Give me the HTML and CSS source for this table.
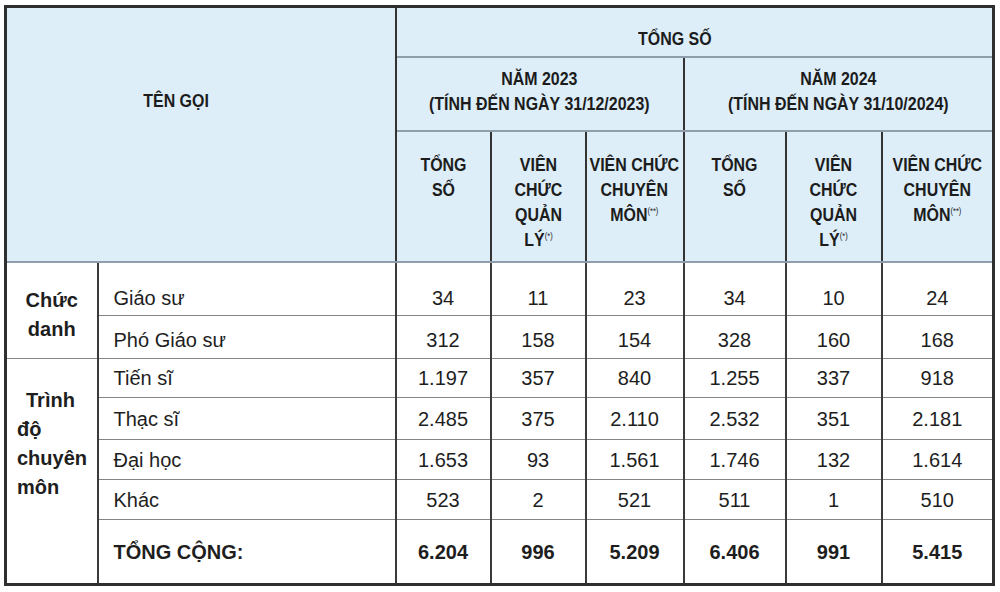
FILE: index.html
```html
<!DOCTYPE html>
<html lang="vi">
<head>
<meta charset="utf-8">
<title>Tổng số viên chức</title>
<link rel="stylesheet" href="styles.css">
</head>
<body>
<table class="staff">
  <colgroup>
    <col class="c-a"><col class="c-b"><col class="c-c"><col class="c-d"><col class="c-e"><col class="c-f"><col class="c-g"><col class="c-h">
  </colgroup>
  <thead>
    <tr class="h1">
      <th colspan="2" rowspan="3" class="name-head"><span class="hx">TÊN GỌI</span></th>
      <th colspan="6" class="total-head"><span class="hx">TỔNG SỐ</span></th>
    </tr>
    <tr class="h2">
      <th colspan="3"><span class="hx">NĂM 2023<br>(TÍNH ĐẾN NGÀY 31/12/2023)</span></th>
      <th colspan="3"><span class="hx">NĂM 2024<br>(TÍNH ĐẾN NGÀY 31/10/2024)</span></th>
    </tr>
    <tr class="h3">
      <th><span class="hx">TỔNG<br>SỐ</span></th>
      <th><span class="hx">VIÊN<br>CHỨC<br>QUẢN<br>LÝ<sup>(*)</sup></span></th>
      <th><span class="hx">VIÊN CHỨC<br>CHUYÊN<br>MÔN<sup>(**)</sup></span></th>
      <th><span class="hx">TỔNG<br>SỐ</span></th>
      <th><span class="hx">VIÊN<br>CHỨC<br>QUẢN<br>LÝ<sup>(*)</sup></span></th>
      <th><span class="hx">VIÊN CHỨC<br>CHUYÊN<br>MÔN<sup>(**)</sup></span></th>
    </tr>
  </thead>
  <tbody>
    <tr class="r1">
      <th rowspan="2" class="group g1">Chức<br>danh</th>
      <td class="name">Giáo sư</td><td>34</td><td>11</td><td>23</td><td>34</td><td>10</td><td>24</td>
    </tr>
    <tr class="r2">
      <td class="name">Phó Giáo sư</td><td>312</td><td>158</td><td>154</td><td>328</td><td>160</td><td>168</td>
    </tr>
    <tr class="r3">
      <th rowspan="4" class="group g2">Trình<br>độ<br>chuyên<br>môn</th>
      <td class="name">Tiến sĩ</td><td>1.197</td><td>357</td><td>840</td><td>1.255</td><td>337</td><td>918</td>
    </tr>
    <tr class="r4">
      <td class="name">Thạc sĩ</td><td>2.485</td><td>375</td><td>2.110</td><td>2.532</td><td>351</td><td>2.181</td>
    </tr>
    <tr class="r5">
      <td class="name">Đại học</td><td>1.653</td><td>93</td><td>1.561</td><td>1.746</td><td>132</td><td>1.614</td>
    </tr>
    <tr class="r6">
      <td class="name">Khác</td><td>523</td><td>2</td><td>521</td><td>511</td><td>1</td><td>510</td>
    </tr>
    <tr class="total">
      <td class="group-empty"></td>
      <td class="name">TỔNG CỘNG:</td><td>6.204</td><td>996</td><td>5.209</td><td>6.406</td><td>991</td><td>5.415</td>
    </tr>
  </tbody>
</table>
</body>
</html>
```

FILE: styles.css
```css
body {
  margin: 0;
  background: #ffffff;
  font-family: "Liberation Sans", Arial, sans-serif;
  color: #1e1e1e;
}

.staff {
  border-collapse: collapse;
  table-layout: fixed;
  width: 989px;
  margin: 5px 0 0 4px;
  border: 3px solid #2f2f2f;
}

.c-a { width: 92px; }
.c-b { width: 298px; }
.c-c { width: 95px; }
.c-d { width: 95px; }
.c-e { width: 98px; }
.c-f { width: 102px; }
.c-g { width: 96px; }
.c-h { width: 112px; }

.staff thead th {
  background: #ddeef9;
  font-family: "Liberation Sans", Arial, sans-serif;
  font-weight: bold;
  font-size: 19px;
  line-height: 25px;
  text-align: center;
  padding: 0;
  color: #1c1c1c;
  border-left: 2px solid #333333;
  border-right: 2px solid #333333;
  border-top: 2px solid #8e9eaa;
  border-bottom: 2px solid #8e9eaa;
}

.hx {
  display: inline-block;
  white-space: nowrap;
  margin: 0 -24px;
  transform: scaleX(0.84);
  transform-origin: center top;
}

.staff thead sup {
  font-size: 9px;
  line-height: 0;
  vertical-align: 7px;
  font-weight: normal;
}

.h1 { height: 50px; }
.h2 { height: 74px; }
.h3 { height: 131px; }

.staff thead th.name-head {
  vertical-align: top;
  padding: 80px 50px 0 0;
}

.staff thead th.total-head {
  padding: 14px 38px 0 0;
}

.staff .h2 th {
  padding-bottom: 6px;
}

.staff .h3 th {
  vertical-align: top;
  padding-top: 20px;
}

.staff tbody td,
.staff tbody th {
  font-size: 20px;
  line-height: 24px;
  text-align: center;
  padding: 0;
  border-left: 2px solid #3a3a3a;
  border-right: 2px solid #3a3a3a;
  border-top: 1px solid #858585;
  border-bottom: 1px solid #858585;
}

.staff tbody td.name {
  text-align: left;
  padding-left: 15px;
}

.staff tbody th.group {
  font-weight: bold;
  line-height: 29px;
}

.staff tbody th.g1 {
  text-align: center;
  padding-top: 10px;
}

.staff tbody th.g2 {
  text-align: left;
  padding: 10px 0 0 10px;
  text-indent: 9px;
  border-bottom: none;
}

.staff tbody td.group-empty {
  border-top: none;
}

.r1 { height: 54px; }
.staff .r1 td { padding-top: 18px; }
.r2 { height: 43px; }
.staff .r2 td { padding-top: 5px; }
.r3 { height: 39px; }
.r4 { height: 42px; }
.r5 { height: 40px; }
.r6 { height: 40px; }
.total { height: 65px; }

.total td {
  font-weight: bold;
}
```
